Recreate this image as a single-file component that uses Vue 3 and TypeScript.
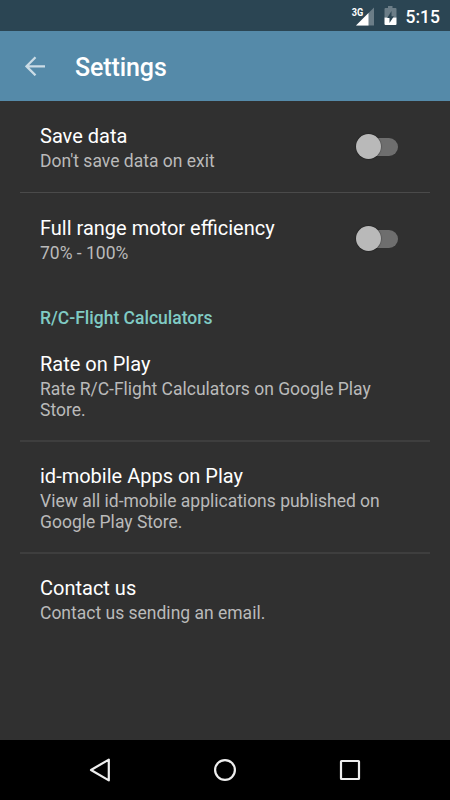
<script setup lang="ts">
interface Preference {
  title: string
  summary: string
  toggle?: boolean
}

const general: Preference[] = [
  { title: 'Save data', summary: "Don't save data on exit", toggle: true },
  { title: 'Full range motor efficiency', summary: '70% - 100%', toggle: true },
]

const about: Preference[] = [
  { title: 'Rate on Play', summary: 'Rate R/C-Flight Calculators on Google Play Store.' },
  { title: 'id-mobile Apps on Play', summary: 'View all id-mobile applications published on Google Play Store.' },
  { title: 'Contact us', summary: 'Contact us sending an email.' },
]
</script>

<template>
  <div class="screen">
    <header class="status">
      <svg class="signal" width="24" height="20" viewBox="0 0 24 20">
        <path d="M24 .5v18H6z" fill="#fff" fill-opacity=".3" />
        <path d="M18.5 6v12.500H6z" fill="#fff" />
        <text x="1.8" y="8.500" textLength="11.5" lengthAdjust="spacingAndGlyphs" class="network">3G</text>
      </svg>
      <svg class="battery" width="13" height="19" viewBox="0 0 13 19">
        <path d="M4 0h4.500v2h3q1 0 1 1v8.500H.5V3q0-1 1-1H4z" fill="#fff" fill-opacity=".3" />
        <path d="M.5 11.500h12V18q0 1-1 1h-10q-1 0-1-1z" fill="#fff" />
        <path d="M7.500 5v5.200h2.400L5.500 17v-5H3.200z" fill="#2b4553" />
      </svg>
      <span class="clock">5:15</span>
    </header>

    <div class="toolbar">
      <svg class="back" width="20" height="20" viewBox="0 0 20 20">
        <path d="M20 10.300H2M10.500 1.300l-9 9 9 9" fill="none" stroke="#cbdce6" stroke-width="2.3" />
      </svg>
      <h1>Settings</h1>
    </div>

    <main>
      <section>
        <div v-for="item in general" :key="item.title" class="row">
          <div class="copy">
            <div class="title">{{ item.title }}</div>
            <div class="summary">{{ item.summary }}</div>
          </div>
          <div v-if="item.toggle" class="switch"><div class="thumb"></div></div>
        </div>
      </section>
      <h2>R/C-Flight Calculators</h2>
      <section class="about">
        <div v-for="item in about" :key="item.title" class="row">
          <div class="copy">
            <div class="title">{{ item.title }}</div>
            <div class="summary">{{ item.summary }}</div>
          </div>
        </div>
      </section>
    </main>

    <nav>
      <svg width="24" height="24" viewBox="0 0 24 24"><path d="M20.800 1.600v20.800L3 12z" /></svg>
      <svg width="24" height="24" viewBox="0 0 24 24"><circle cx="12" cy="12" r="9.900" /></svg>
      <svg width="24" height="24" viewBox="0 0 24 24"><rect x="3" y="3" width="18" height="18" rx=".5" /></svg>
    </nav>
  </div>
</template>

<style>
body {
  margin: 0;
  background: #303030;
}
</style>

<style scoped>
.screen {
  display: flex;
  flex-direction: column;
  width: 450px;
  height: 800px;
  overflow: hidden;
  background: #303030;
  color: #fff;
  font-family: Roboto, sans-serif;
}
.status {
  display: flex;
  align-items: center;
  justify-content: flex-end;
  box-sizing: border-box;
  height: 31px;
  padding-right: 10px;
  background: #2b4553;
}
.signal {
  margin-right: 10px;
  margin-top: 2px;
}
.network {
  font-size: 10px;
  font-weight: 700;
  fill: #fff;
}
.battery {
  margin-right: 9px;
}
.clock {
  font-size: 17.5px;
  font-weight: 500;
  line-height: 20px;
  margin-top: 2px;
}
.toolbar {
  display: flex;
  align-items: center;
  height: 70px;
  padding-left: 25px;
  background: #558aa9;
}
h1 {
  margin: 4px 0 0 30px;
  font-size: 25px;
  font-weight: 500;
  line-height: 30px;
  letter-spacing: -0.1px;
}
main {
  flex: 1;
}
.row {
  display: flex;
  align-items: flex-start;
  justify-content: space-between;
  margin: 0 20px;
  padding: 23px 32px 20.5px 20px;
}
.row + .row {
  padding-top: 22.5px;
  border-top: 1px solid #4a4a4a;
}
.about .row {
  padding-bottom: 20px;
}
.about .row + .row {
  padding-top: 22px;
  border-top: 2px solid #3e3e3e;
}
.title {
  font-size: 20px;
  line-height: 24px;
}
.summary {
  margin-top: 3px;
  font-size: 17.5px;
  line-height: 20.5px;
  color: #bababa;
}
.switch {
  width: 41px;
  height: 18px;
  margin-top: 14px;
  border-radius: 9px;
  background: #6e6e6e;
}
.thumb {
  width: 25px;
  height: 25px;
  margin: -4px 0 0 -1px;
  border-radius: 50%;
  background: #b9b9b9;
  box-shadow: 0 0 1px 0.5px rgba(0, 0, 0, 0.35);
}
h2 {
  margin: 0;
  padding: 24.5px 40px 0.5px;
  font-size: 17.5px;
  font-weight: 500;
  line-height: 20.5px;
  color: #80cbc4;
}
nav {
  display: flex;
  align-items: center;
  justify-content: space-between;
  box-sizing: border-box;
  height: 60px;
  padding: 0 88px;
  background: #000;
}
nav svg {
  fill: none;
  stroke: #eee;
  stroke-width: 2.2;
  stroke-linejoin: round;
}
</style>
